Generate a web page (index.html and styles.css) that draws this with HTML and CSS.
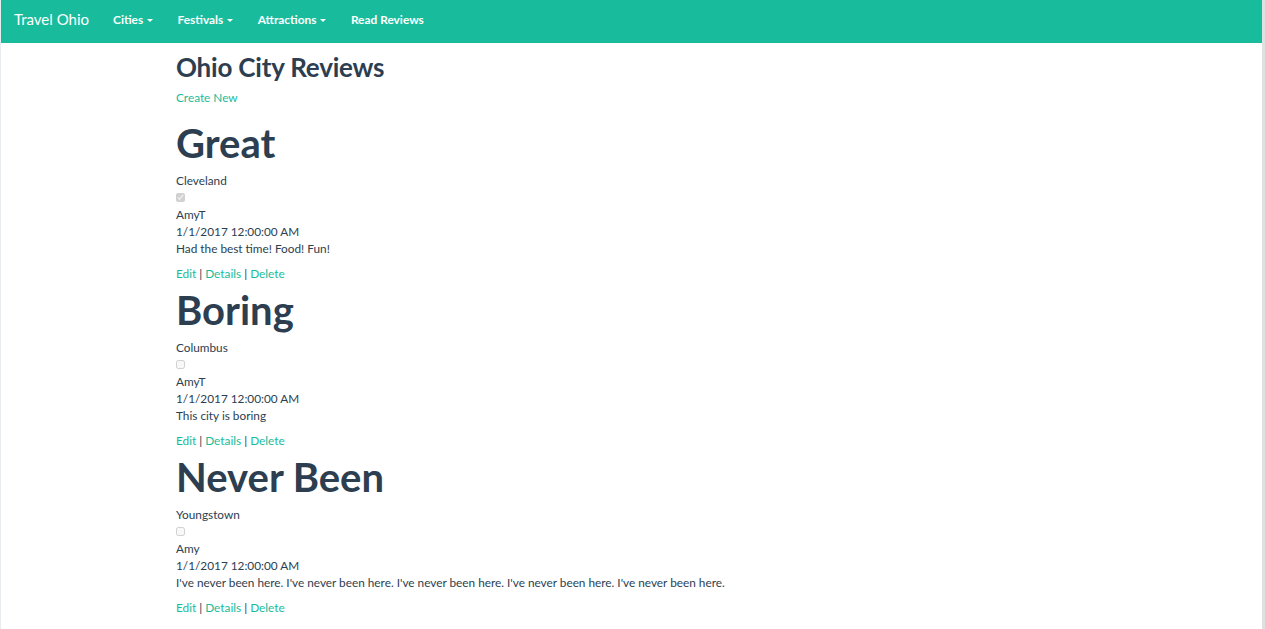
FILE: index.html
```html
<!DOCTYPE html>
<html>
<head>
<meta charset="utf-8">
<title>Ohio City Reviews</title>
<link rel="stylesheet" href="styles.css">
</head>
<body>
<nav class="navbar">
  <a class="brand" href="#">Travel Ohio</a>
  <ul class="nav">
    <li><a href="#">Cities <span class="caret"></span></a></li>
    <li><a href="#">Festivals <span class="caret"></span></a></li>
    <li><a href="#">Attractions <span class="caret"></span></a></li>
    <li><a href="#">Read Reviews</a></li>
  </ul>
</nav>
<main class="container">
  <h2 class="page-title">Ohio City Reviews</h2>
  <p class="create"><a href="#">Create New</a></p>

  <section class="review">
    <h1>Great</h1>
    <div class="line">Cleveland</div>
    <div class="line"><input type="checkbox" checked disabled></div>
    <div class="line">AmyT</div>
    <div class="line">1/1/2017 12:00:00 AM</div>
    <div class="line">Had the best time! Food! Fun!</div>
    <p class="actions"><a href="#">Edit</a> | <a href="#">Details</a> | <a href="#">Delete</a></p>
  </section>

  <section class="review">
    <h1>Boring</h1>
    <div class="line">Columbus</div>
    <div class="line"><input type="checkbox" disabled></div>
    <div class="line">AmyT</div>
    <div class="line">1/1/2017 12:00:00 AM</div>
    <div class="line">This city is boring</div>
    <p class="actions"><a href="#">Edit</a> | <a href="#">Details</a> | <a href="#">Delete</a></p>
  </section>

  <section class="review">
    <h1>Never Been</h1>
    <div class="line">Youngstown</div>
    <div class="line"><input type="checkbox" disabled></div>
    <div class="line">Amy</div>
    <div class="line">1/1/2017 12:00:00 AM</div>
    <div class="line">I've never been here. I've never been here. I've never been here. I've never been here. I've never been here.</div>
    <p class="actions"><a href="#">Edit</a> | <a href="#">Details</a> | <a href="#">Delete</a></p>
  </section>
</main>
</body>
</html>
```

FILE: styles.css
```css
html, body {
  margin: 0;
  padding: 0;
  background: #ffffff;
}
body {
  font-family: Lato, "Open Sans", sans-serif;
  font-size: 11.8px;
  line-height: 17px;
  color: #2c3e50;
  border-left: 1px solid #e8ecef;
  border-right: 3px solid #e0e0e0;
  min-height: 629px;
  box-sizing: border-box;
}
a {
  color: #18bc9c;
  text-decoration: none;
}
.navbar {
  background: #18bc9c;
  height: 43px;
  display: flex;
  align-items: center;
  padding: 0 0 0 13px;
}
.brand {
  color: #ffffff;
  font-size: 15px;
  margin-right: 24px;
  margin-top: -5px;
}
.nav {
  list-style: none;
  margin: -5px 0 0;
  padding: 0;
  display: flex;
  gap: 24.5px;
}
.nav a {
  color: #ffffff;
  font-weight: bold;
  font-size: 11.9px;
}
.caret {
  display: inline-block;
  width: 0;
  height: 0;
  margin-left: 1px;
  vertical-align: middle;
  border-top: 3px solid #ffffff;
  border-left: 3px solid transparent;
  border-right: 3px solid transparent;
}
.container {
  padding-left: 175px;
}
.page-title {
  font-size: 26px;
  font-weight: bold;
  line-height: 30px;
  margin: 9px 0 0;
  letter-spacing: -0.2px;
}
.create {
  margin: 7px 0 0;
}
.review h1 {
  font-size: 40px;
  line-height: 44px;
  font-weight: bold;
  margin: 15px 0 7px;
}
.review + .review h1 {
  margin-top: 6px;
}
.line {
  min-height: 17px;
}
.line input {
  width: 9px;
  height: 9px;
  margin: 4px 0 0 0;
  vertical-align: top;
}
.actions {
  margin: 8px 0 0;
  color: #2c3e50;
}
```
